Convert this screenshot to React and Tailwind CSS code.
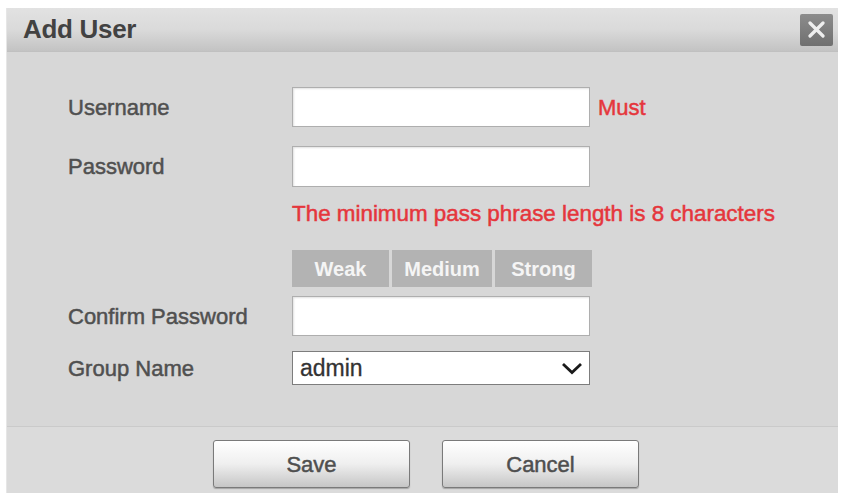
import React from 'react';

function Field({ label, children }) {
    return (
        <div className="flex items-center">
            <div className="w-[224px] text-[22px] text-[#505050] [-webkit-text-stroke:0.5px_#505050]">{label}</div>
            {children}
        </div>
    );
}

function TextBox({ h = 'h-[40px]' }) {
    return (
        <div className={`w-[298px] ${h} bg-white border border-[#aeaeae] shadow-[inset_1px_1px_2px_rgba(0,0,0,0.12)]`} />
    );
}

export default function App() {
    return (
        <div className="min-h-screen bg-white pt-[8px] pl-[6px] font-['Liberation_Sans',Arial,sans-serif]">
            <div className="w-[832px] bg-[#d7d7d7] border-l border-[#e6e6e6]">
                {/* Header */}
                <div className="h-[44px] flex items-center justify-between pl-[16px] pr-[5px] bg-gradient-to-b from-[#e2e2e2] via-[#dadada] to-[#c3c3c3] border-b border-[#c0c0c0]">
                    <span className="text-[26px] font-bold text-[#424242] tracking-[-0.3px]">Add User</span>
                    <button className="w-[33px] h-[32px] rounded-[2px] bg-gradient-to-b from-[#8c8c8c] to-[#707070] flex items-center justify-center">
                        <svg width="17" height="17" viewBox="0 0 17 17">
                            <path d="M2 2 L15 15 M15 2 L2 15" stroke="#eeeeee" strokeWidth="3.2" strokeLinecap="round" />
                        </svg>
                    </button>
                </div>

                {/* Body */}
                <div className="pt-[35px] pb-[41px] pl-[61px]">
                    <Field label="Username">
                        <TextBox />
                        <span className="ml-[8px] text-[22px] text-[#e5363c] [-webkit-text-stroke:0.5px_#e5363c]">Must</span>
                    </Field>
                    <div className="mt-[19px]">
                        <Field label="Password">
                            <TextBox h="h-[41px]" />
                        </Field>
                    </div>
                    <div className="mt-[16px] pl-[224px] text-[22.4px] leading-[22px] text-[#e5363c] [-webkit-text-stroke:0.5px_#e5363c]">
                        The minimum pass phrase length is 8 characters
                    </div>
                    <div className="mt-[25px] pl-[224px] flex gap-[3px]">
                        {['Weak', 'Medium', 'Strong'].map((s, i) => (
                            <div
                                key={s}
                                className={`h-[37px] ${i === 1 ? 'w-[100px]' : 'w-[97px]'} bg-[#b3b3b3] flex items-center justify-center text-[20px] font-bold text-[#f5f5f5]`}
                            >
                                {s}
                            </div>
                        ))}
                    </div>
                    <div className="mt-[9px]">
                        <Field label="Confirm Password">
                            <TextBox />
                        </Field>
                    </div>
                    <div className="mt-[15px]">
                        <Field label="Group Name">
                            <div className="w-[298px] h-[34px] bg-white border border-[#7d7d7d] flex items-center justify-between pl-[7px] pr-[6px]">
                                <span className="text-[23px] text-[#333] [-webkit-text-stroke:0.3px_#333]">admin</span>
                                <svg width="22" height="13" viewBox="0 0 22 13">
                                    <path d="M2 2 L11 10.5 L20 2" fill="none" stroke="#1a1a1a" strokeWidth="2.8" />
                                </svg>
                            </div>
                        </Field>
                    </div>
                </div>

                {/* Footer */}
                <div className="h-[67px] border-t border-[#cacaca] bg-[#dbdbdb] pt-[13px] pl-[206px] flex items-start gap-[32px]">
                    {['Save', 'Cancel'].map((b) => (
                        <button
                            key={b}
                            className="w-[197px] h-[48px] rounded-[3px] border border-[#7a7a7a] bg-gradient-to-b from-[#ffffff] via-[#efefef] to-[#c6c6c6] shadow-[0_1px_1px_rgba(0,0,0,0.25)] text-[22px] text-[#4f4f4f] [-webkit-text-stroke:0.5px_#4f4f4f]"
                        >
                            {b}
                        </button>
                    ))}
                </div>
            </div>
        </div>
    );
}
